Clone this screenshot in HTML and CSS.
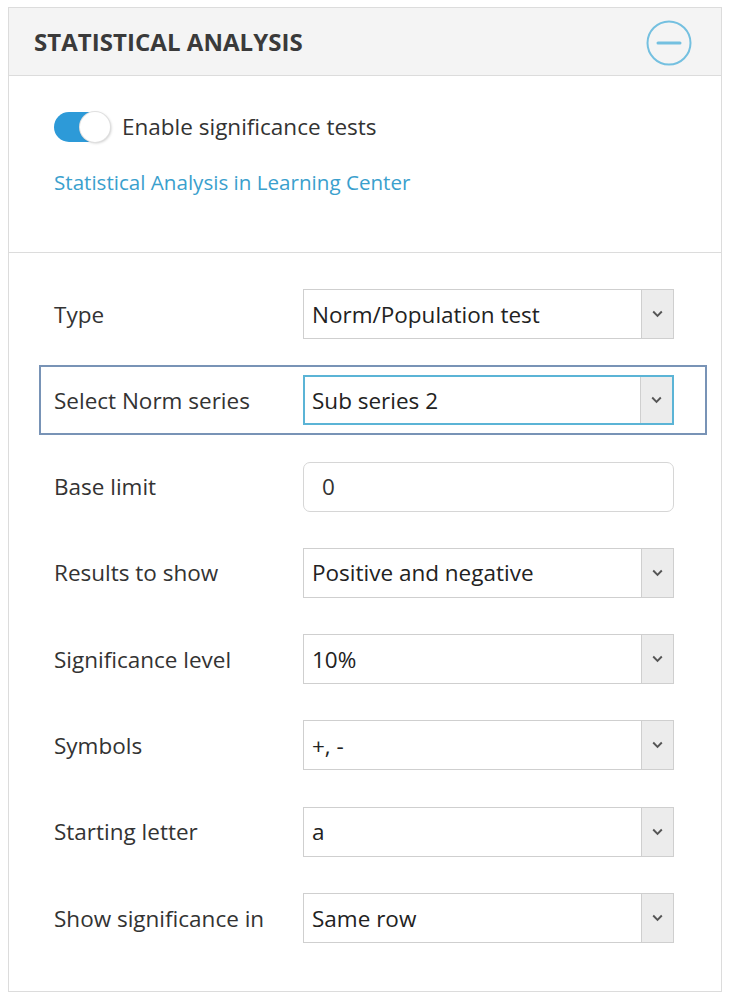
FILE: index.html
```
<!DOCTYPE html>
<html>
<head>
<meta charset="utf-8">
<link rel="stylesheet" href="styles.css">
</head>
<body>
<div class="panel">
  <div class="panel-header">
    <span class="panel-title">STATISTICAL ANALYSIS</span>
    <svg class="collapse-icon" width="48" height="48" viewBox="0 0 48 48">
      <circle cx="24" cy="24" r="21.5" fill="none" stroke="#74c0e0" stroke-width="2"/>
      <line x1="13" y1="24" x2="35" y2="24" stroke="#74c0e0" stroke-width="3" stroke-linecap="round"/>
    </svg>
  </div>
  <div class="section-enable">
    <div class="toggle-row">
      <span class="toggle"><span class="knob"></span></span>
      <span class="toggle-label">Enable significance tests</span>
    </div>
    <a class="learn-link" href="#">Statistical Analysis in Learning Center</a>
  </div>
  <div class="section-form">
    <div class="row">
      <span class="label">Type</span>
      <div class="select"><span class="value">Norm/Population test</span><span class="arrow"><svg width="11" height="8" viewBox="0 0 11 8"><path d="M1.2 1.5 L5.5 5.8 L9.8 1.5" fill="none" stroke="#555" stroke-width="1.9"/></svg></span></div>
    </div>
    <div class="row highlighted">
      <span class="label">Select Norm series</span>
      <div class="select focused"><span class="value">Sub series 2</span><span class="arrow"><svg width="11" height="8" viewBox="0 0 11 8"><path d="M1.2 1.5 L5.5 5.8 L9.8 1.5" fill="none" stroke="#555" stroke-width="1.9"/></svg></span></div>
    </div>
    <div class="row">
      <span class="label">Base limit</span>
      <div class="input"><span class="value">0</span></div>
    </div>
    <div class="row">
      <span class="label">Results to show</span>
      <div class="select"><span class="value">Positive and negative</span><span class="arrow"><svg width="11" height="8" viewBox="0 0 11 8"><path d="M1.2 1.5 L5.5 5.8 L9.8 1.5" fill="none" stroke="#555" stroke-width="1.9"/></svg></span></div>
    </div>
    <div class="row">
      <span class="label">Significance level</span>
      <div class="select"><span class="value">10%</span><span class="arrow"><svg width="11" height="8" viewBox="0 0 11 8"><path d="M1.2 1.5 L5.5 5.8 L9.8 1.5" fill="none" stroke="#555" stroke-width="1.9"/></svg></span></div>
    </div>
    <div class="row">
      <span class="label">Symbols</span>
      <div class="select"><span class="value">+, -</span><span class="arrow"><svg width="11" height="8" viewBox="0 0 11 8"><path d="M1.2 1.5 L5.5 5.8 L9.8 1.5" fill="none" stroke="#555" stroke-width="1.9"/></svg></span></div>
    </div>
    <div class="row">
      <span class="label">Starting letter</span>
      <div class="select"><span class="value">a</span><span class="arrow"><svg width="11" height="8" viewBox="0 0 11 8"><path d="M1.2 1.5 L5.5 5.8 L9.8 1.5" fill="none" stroke="#555" stroke-width="1.9"/></svg></span></div>
    </div>
    <div class="row">
      <span class="label">Show significance in</span>
      <div class="select"><span class="value">Same row</span><span class="arrow"><svg width="11" height="8" viewBox="0 0 11 8"><path d="M1.2 1.5 L5.5 5.8 L9.8 1.5" fill="none" stroke="#555" stroke-width="1.9"/></svg></span></div>
    </div>
  </div>
</div>
</body>
</html>
```
FILE: styles.css
```
* { box-sizing: border-box; }
body {
  margin: 0;
  background: #fff;
  font-family: "Open Sans", "Noto Sans", sans-serif;
  color: #333;
}
.panel {
  margin: 7px 0 0 8px;
  width: 714px;
  border: 1px solid #dcdcdc;
  background: #fff;
}
.panel-header {
  height: 68px;
  background: #f4f4f4;
  border-bottom: 1px solid #dcdcdc;
  display: flex;
  align-items: center;
  justify-content: space-between;
  padding: 0 28px 0 25px;
}
.panel-title {
  font-size: 24px;
  font-weight: 700;
  color: #3a3a3a;
  letter-spacing: 0.05px;
}
.collapse-icon { display: block; margin-top: 2px; }
.section-enable {
  padding: 35px 45px 0 45px;
  height: 177px;
  border-bottom: 1px solid #dcdcdc;
}
.toggle-row {
  display: flex;
  align-items: center;
  gap: 12px;
}
.toggle {
  position: relative;
  width: 56px;
  height: 30px;
  border-radius: 15px;
  background: #2d9ad8;
  display: inline-block;
}
.knob {
  position: absolute;
  right: 0;
  top: 0;
  width: 30px;
  height: 30px;
  border-radius: 50%;
  background: #fff;
  box-shadow: 0 0 0 1px #e0e0e0, 1px 1px 3px rgba(0,0,0,0.25);
}
.toggle-label {
  font-size: 22.5px;
  color: #333;
}
.learn-link {
  display: block;
  margin-top: 26px;
  font-size: 20.6px;
  color: #3aa0cd;
  text-decoration: none;
}
.section-form {
  padding: 36px 46px 48px 45px;
  display: flex;
  flex-direction: column;
  gap: 36.3px;
}
.row {
  position: relative;
  display: flex;
  align-items: center;
  height: 50px;
}
.row.highlighted::before {
  content: "";
  position: absolute;
  top: -10px;
  bottom: -10px;
  left: -15px;
  right: -32px;
  border: 2px solid #7893b6;
  pointer-events: none;
}
.label {
  width: 249px;
  font-size: 22.5px;
  color: #333;
}
.select, .input {
  width: 371px;
  height: 50px;
  border: 1px solid #cfcfcf;
  display: flex;
  align-items: center;
  background: #fff;
}
.select .value {
  flex: 1;
  padding-left: 8px;
  font-size: 22.5px;
  color: #222;
}
.select.focused {
  border: 2px solid #5bb4d6;
}
.select.focused .value { padding-left: 7px; }
.arrow {
  width: 32px;
  align-self: stretch;
  background: #ececec;
  border-left: 1px solid #cfcfcf;
  display: flex;
  align-items: center;
  justify-content: center;
}
.input {
  border-radius: 7px;
  border-color: #d6d6d6;
}
.input .value {
  padding-left: 18px;
  font-size: 22.5px;
  color: #333;
}
```
